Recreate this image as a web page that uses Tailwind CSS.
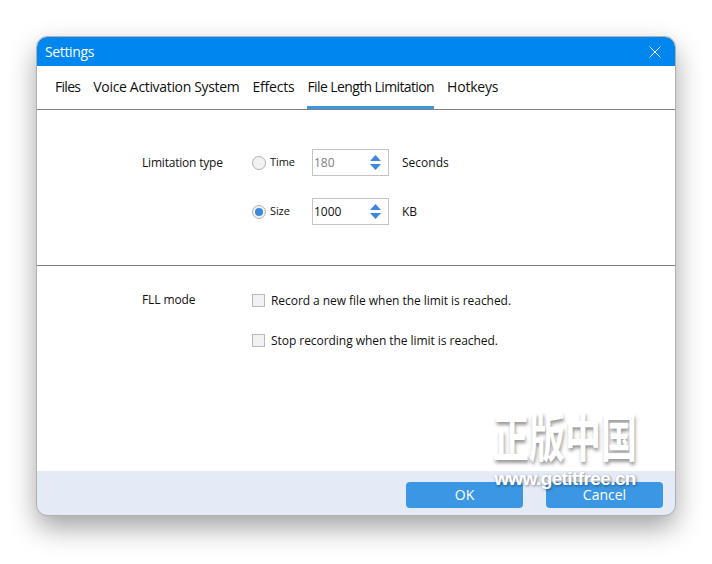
<!DOCTYPE html>
<html>

<head>
    <title>Settings</title>
    <script src="https://cdn.jsdelivr.net/npm/@tailwindcss/browser@4"></script>
</head>

<body class="bg-white">
    <div class="w-[712px] h-[564px] pt-[37px] pl-[37px] overflow-hidden font-['Open_Sans','Liberation_Sans',sans-serif] text-[12px] text-[#111]">

        <!-- Window -->
        <div class="relative w-[638px] h-[478px] flex flex-col rounded-[10px] overflow-hidden bg-white shadow-[0_12px_28px_rgba(0,0,0,0.38)] outline outline-[#b0b0b0]">

            <!-- Title bar -->
            <header class="h-[29px] shrink-0 flex items-center justify-between bg-[#0086ef] pl-[8px] pr-[14px] text-white text-[14px] tracking-[-0.35px]">
                <span>Settings</span>
                <svg class="w-[12px] h-[12px]" viewBox="0 0 12 12" fill="none" stroke="white" stroke-width="1">
                    <path d="M0.5 0.5L11.5 11.5M11.5 0.5L0.5 11.5" />
                </svg>
            </header>

            <!-- Tabs -->
            <nav class="h-[44px] shrink-0 flex gap-[13px] pl-[18px] pb-[2px] border-b border-[#808080] text-[14px]">
                <a class="h-full flex items-center tracking-[-0.7px]">Files</a>
                <a class="h-full flex items-center tracking-[-0.33px]">Voice Activation System</a>
                <a class="h-full flex items-center tracking-[-0.2px]">Effects</a>
                <a class="h-[43px] flex items-center border-b-[3px] border-[#3b97e6] pt-[1px] tracking-[-0.61px]">File Length Limitation</a>
                <a class="h-full flex items-center tracking-[-0.2px]">Hotkeys</a>
            </nav>

            <main class="flex-1 flex flex-col">

                <!-- Limitation type -->
                <section class="h-[156px] shrink-0 border-b border-[#808080] pl-[105px] pt-[39px] flex">
                    <div class="w-[110px] h-[27px] flex items-center tracking-[-0.2px]">Limitation type</div>
                    <div class="flex flex-col gap-[22px]">
                        <div class="h-[27px] flex items-center">
                            <span class="w-[14px] h-[14px] rounded-full border border-[#b0b0b0] bg-[#f2f2f2]"></span>
                            <span class="w-[42px] ml-[4px] text-[11px] tracking-[-0.1px]">Time</span>
                            <div class="w-[77px] h-[27px] flex items-center justify-between border border-[#c4c4c4] pl-[1px] pr-[7px] text-[#808080]">
                                <span>180</span>
                                <svg class="w-[11px] h-[15px]" viewBox="0 0 11 15" fill="#3d87dc">
                                    <path d="M5.5 0L11 6H0Z M0 9H11L5.5 15Z" />
                                </svg>
                            </div>
                            <span class="ml-[13px]">Seconds</span>
                        </div>
                        <div class="h-[27px] flex items-center">
                            <span class="w-[14px] h-[14px] rounded-full border border-[#b0b0b0] bg-[#f2f2f2] flex items-center justify-center">
                                <span class="w-[8px] h-[8px] rounded-full bg-[#3d87dc]"></span>
                            </span>
                            <span class="w-[42px] ml-[4px] text-[11px] tracking-[-0.1px]">Size</span>
                            <div class="w-[77px] h-[27px] flex items-center justify-between border border-[#c4c4c4] pl-[1px] pr-[7px]">
                                <span>1000</span>
                                <svg class="w-[11px] h-[15px]" viewBox="0 0 11 15" fill="#3d87dc">
                                    <path d="M5.5 0L11 6H0Z M0 9H11L5.5 15Z" />
                                </svg>
                            </div>
                            <span class="ml-[13px]">KB</span>
                        </div>
                    </div>
                </section>

                <!-- FLL mode -->
                <section class="flex-1 pl-[105px] pt-[26px] flex">
                    <div class="w-[110px] h-[16px] flex items-center tracking-[-0.1px]">FLL mode</div>
                    <div class="flex flex-col gap-[24px]">
                        <label class="h-[16px] flex items-center">
                            <span class="w-[13px] h-[13px] border border-[#b8b8b8] bg-[#f2f2f2]"></span>
                            <span class="ml-[6px] pt-[2px] tracking-[-0.05px]">Record a new file when the limit is reached.</span>
                        </label>
                        <label class="h-[16px] flex items-center">
                            <span class="w-[13px] h-[13px] border border-[#b8b8b8] bg-[#f2f2f2]"></span>
                            <span class="ml-[6px] pt-[2px] tracking-[-0.05px]">Stop recording when the limit is reached.</span>
                        </label>
                    </div>
                </section>
            </main>

            <!-- Footer -->
            <footer class="h-[44px] shrink-0 flex justify-end gap-[23px] pt-[11px] pr-[12px] bg-[#e4eaf6] text-[14px] text-white">
                <button class="w-[117px] h-[26px] pb-[2px] rounded-[4px] bg-[#3b97e4]">OK</button>
                <button class="w-[117px] h-[26px] pb-[2px] rounded-[4px] bg-[#3b97e4]">Cancel</button>
            </footer>

            <!-- Watermark -->
            <div class="absolute left-[453px] top-[370px] w-[150px] flex flex-col items-center text-white pointer-events-none">
                <span class="text-[36px] leading-[54px] font-bold font-['Noto_Sans_CJK_SC',serif] whitespace-nowrap scale-y-[1.45] [text-shadow:1px_2px_3px_rgba(0,0,0,0.4)]">正版中国</span>
                <span class="mt-[8px] text-[19px] leading-[20px] font-bold font-['Liberation_Sans',sans-serif] tracking-[-0.6px] whitespace-nowrap [text-shadow:1px_1px_3px_rgba(0,0,0,0.45)]">www.getitfree.cn</span>
            </div>
        </div>
    </div>
</body>

</html>
